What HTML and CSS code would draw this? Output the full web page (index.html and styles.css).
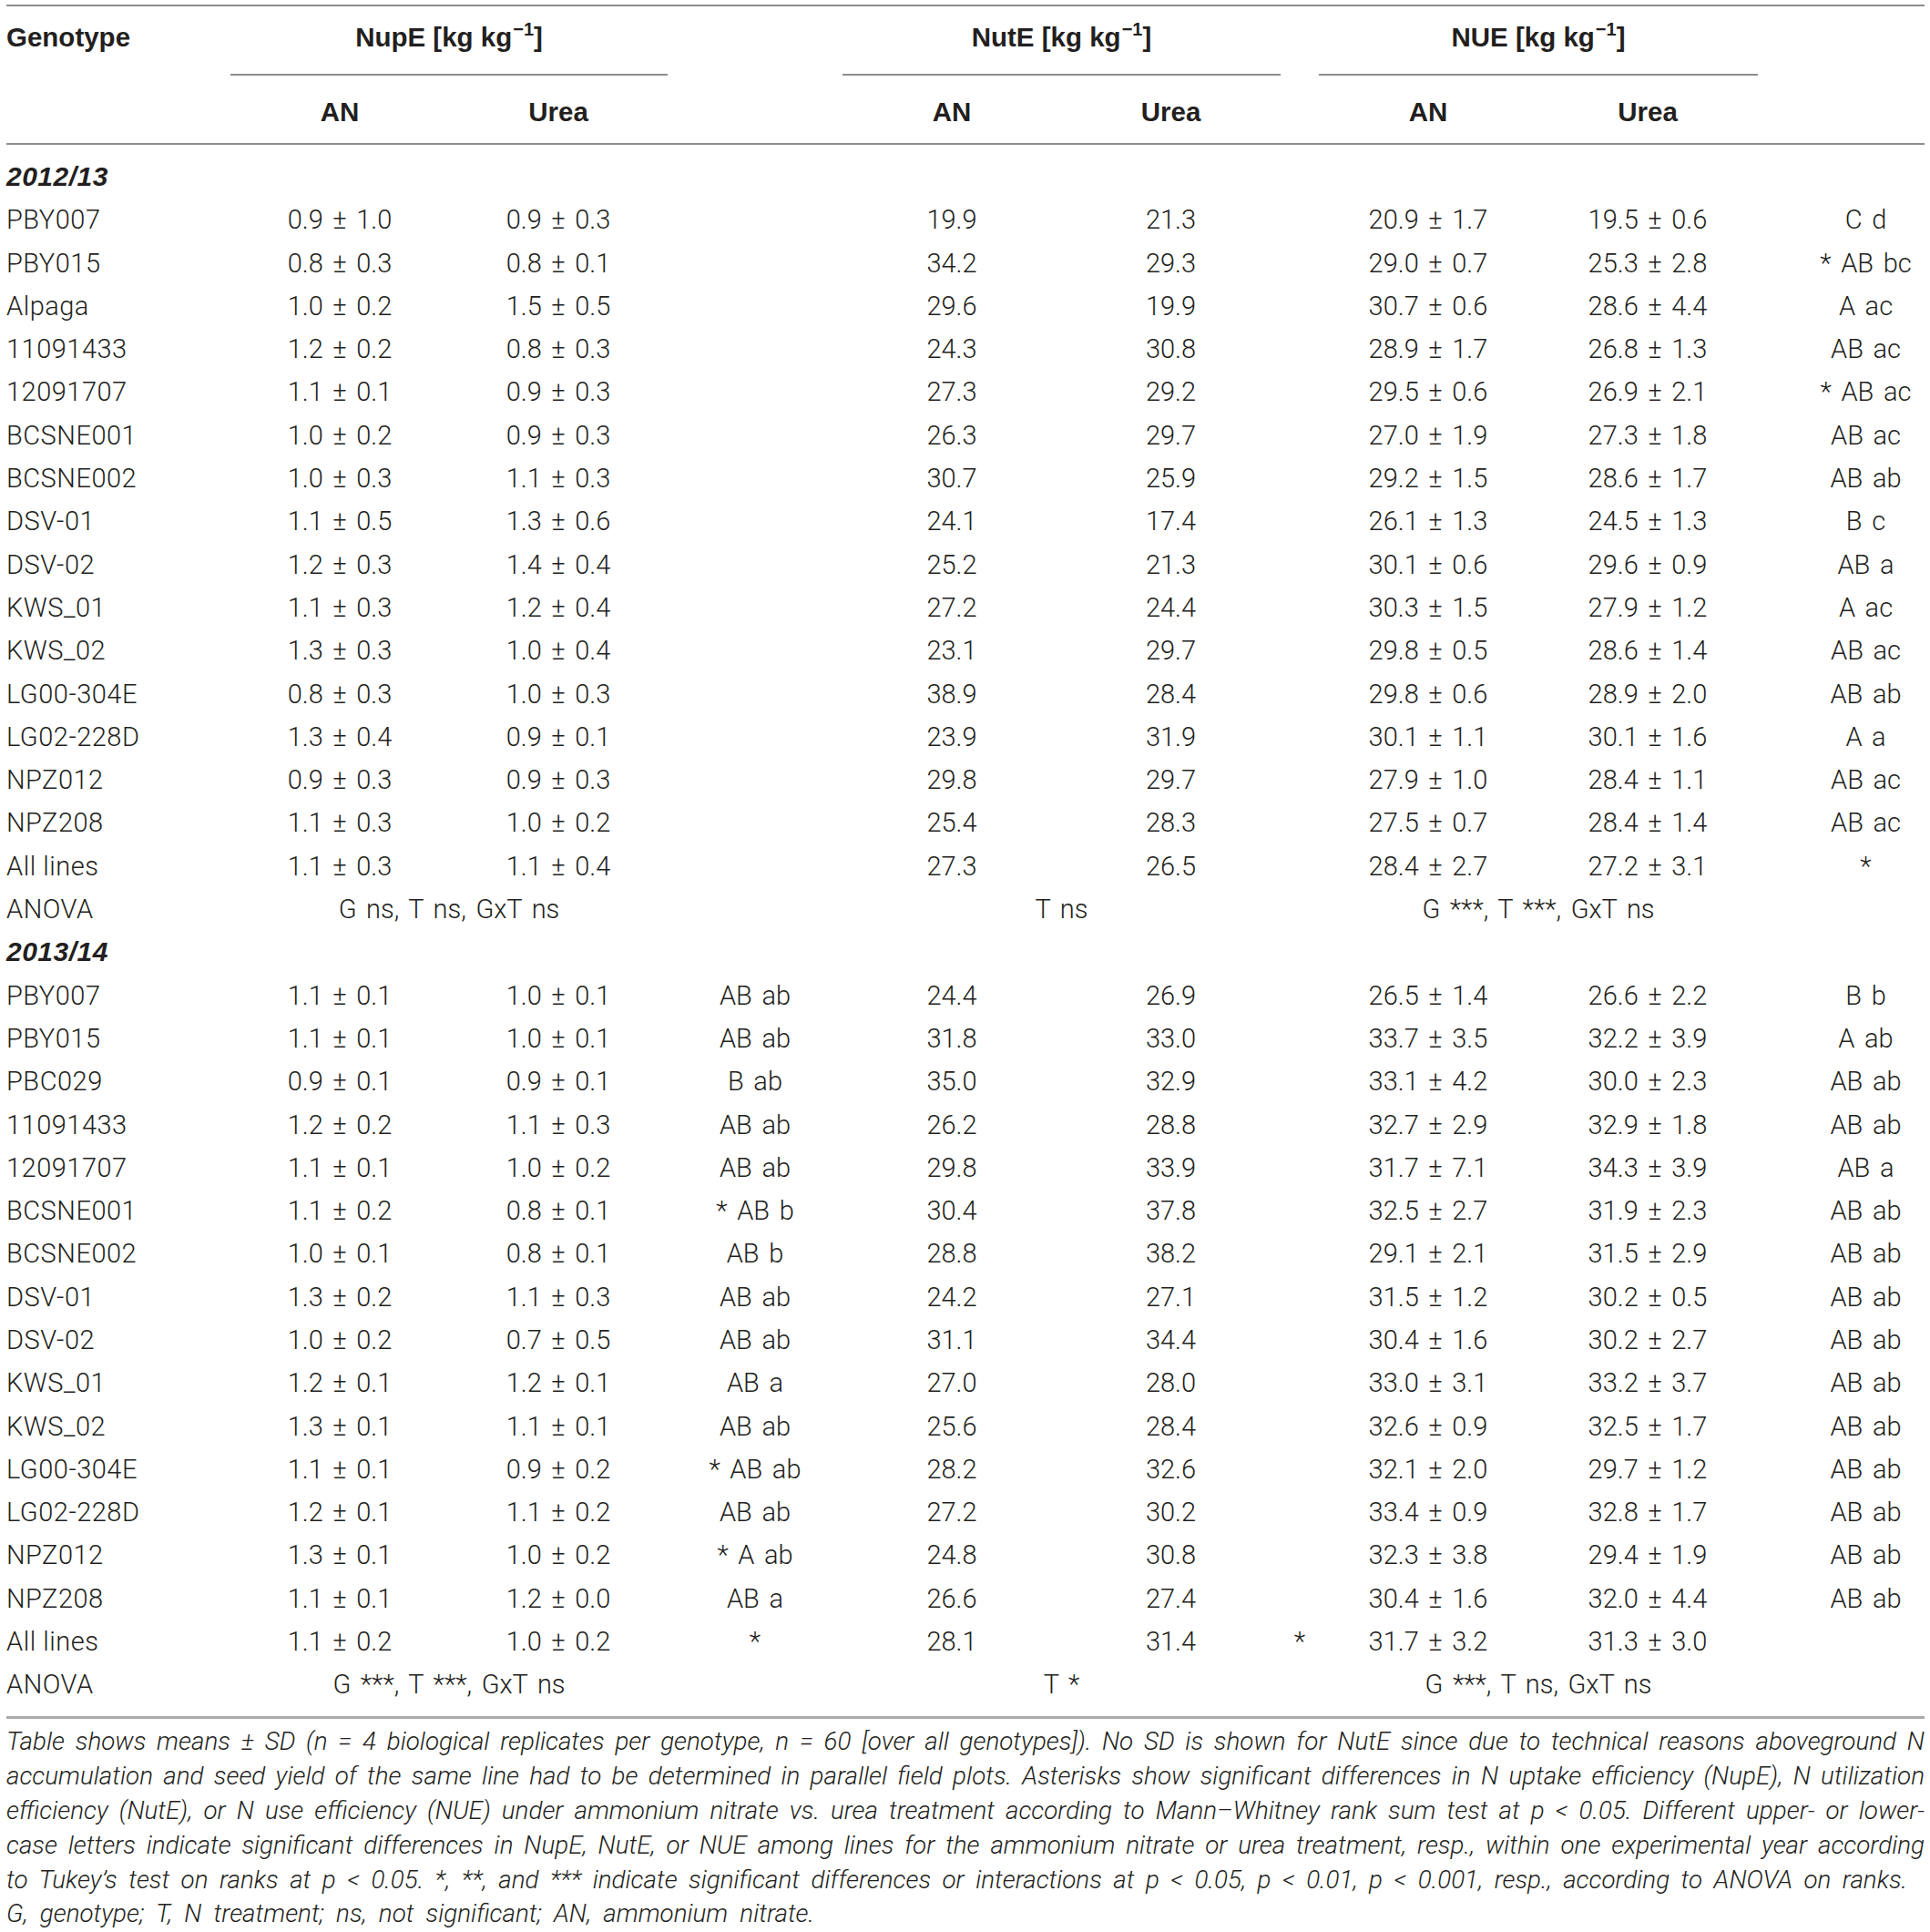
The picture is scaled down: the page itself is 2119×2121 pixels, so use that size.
FILE: index.html
```html
<!DOCTYPE html>
<html lang="en">
<head>
<meta charset="utf-8">
<title>NupE, NutE and NUE table</title>
<link rel="stylesheet" href="styles.css">
</head>
<body>
<div class="page">
  <div class="tbl">
    <div class="grid h1">
      <div class="hc left">Genotype</div>
      <div class="hc grp g1">NupE [kg kg<sup>−1</sup>]</div>
      <div class="hc grp g2">NutE [kg kg<sup>−1</sup>]</div>
      <div class="hc grp g3">NUE [kg kg<sup>−1</sup>]</div>
    </div>
    <div class="grid h2">
      <div></div>
      <div class="hc">AN</div>
      <div class="hc">Urea</div>
      <div></div>
      <div class="hc">AN</div>
      <div class="hc">Urea</div>
      <div></div>
      <div class="hc">AN</div>
      <div class="hc">Urea</div>
      <div></div>
    </div>
    <div class="tbody">
      <div class="grid row"><div class="year">2012/13</div></div>
      <div class="grid row"><div>PBY007</div><div>0.9 ± 1.0</div><div>0.9 ± 0.3</div><div></div><div>19.9</div><div>21.3</div><div></div><div>20.9 ± 1.7</div><div>19.5 ± 0.6</div><div class="last">C d</div></div>
      <div class="grid row"><div>PBY015</div><div>0.8 ± 0.3</div><div>0.8 ± 0.1</div><div></div><div>34.2</div><div>29.3</div><div></div><div>29.0 ± 0.7</div><div>25.3 ± 2.8</div><div class="last">* AB bc</div></div>
      <div class="grid row"><div>Alpaga</div><div>1.0 ± 0.2</div><div>1.5 ± 0.5</div><div></div><div>29.6</div><div>19.9</div><div></div><div>30.7 ± 0.6</div><div>28.6 ± 4.4</div><div class="last">A ac</div></div>
      <div class="grid row"><div>11091433</div><div>1.2 ± 0.2</div><div>0.8 ± 0.3</div><div></div><div>24.3</div><div>30.8</div><div></div><div>28.9 ± 1.7</div><div>26.8 ± 1.3</div><div class="last">AB ac</div></div>
      <div class="grid row"><div>12091707</div><div>1.1 ± 0.1</div><div>0.9 ± 0.3</div><div></div><div>27.3</div><div>29.2</div><div></div><div>29.5 ± 0.6</div><div>26.9 ± 2.1</div><div class="last">* AB ac</div></div>
      <div class="grid row"><div>BCSNE001</div><div>1.0 ± 0.2</div><div>0.9 ± 0.3</div><div></div><div>26.3</div><div>29.7</div><div></div><div>27.0 ± 1.9</div><div>27.3 ± 1.8</div><div class="last">AB ac</div></div>
      <div class="grid row"><div>BCSNE002</div><div>1.0 ± 0.3</div><div>1.1 ± 0.3</div><div></div><div>30.7</div><div>25.9</div><div></div><div>29.2 ± 1.5</div><div>28.6 ± 1.7</div><div class="last">AB ab</div></div>
      <div class="grid row"><div>DSV-01</div><div>1.1 ± 0.5</div><div>1.3 ± 0.6</div><div></div><div>24.1</div><div>17.4</div><div></div><div>26.1 ± 1.3</div><div>24.5 ± 1.3</div><div class="last">B c</div></div>
      <div class="grid row"><div>DSV-02</div><div>1.2 ± 0.3</div><div>1.4 ± 0.4</div><div></div><div>25.2</div><div>21.3</div><div></div><div>30.1 ± 0.6</div><div>29.6 ± 0.9</div><div class="last">AB a</div></div>
      <div class="grid row"><div>KWS_01</div><div>1.1 ± 0.3</div><div>1.2 ± 0.4</div><div></div><div>27.2</div><div>24.4</div><div></div><div>30.3 ± 1.5</div><div>27.9 ± 1.2</div><div class="last">A ac</div></div>
      <div class="grid row"><div>KWS_02</div><div>1.3 ± 0.3</div><div>1.0 ± 0.4</div><div></div><div>23.1</div><div>29.7</div><div></div><div>29.8 ± 0.5</div><div>28.6 ± 1.4</div><div class="last">AB ac</div></div>
      <div class="grid row"><div>LG00-304E</div><div>0.8 ± 0.3</div><div>1.0 ± 0.3</div><div></div><div>38.9</div><div>28.4</div><div></div><div>29.8 ± 0.6</div><div>28.9 ± 2.0</div><div class="last">AB ab</div></div>
      <div class="grid row"><div>LG02-228D</div><div>1.3 ± 0.4</div><div>0.9 ± 0.1</div><div></div><div>23.9</div><div>31.9</div><div></div><div>30.1 ± 1.1</div><div>30.1 ± 1.6</div><div class="last">A a</div></div>
      <div class="grid row"><div>NPZ012</div><div>0.9 ± 0.3</div><div>0.9 ± 0.3</div><div></div><div>29.8</div><div>29.7</div><div></div><div>27.9 ± 1.0</div><div>28.4 ± 1.1</div><div class="last">AB ac</div></div>
      <div class="grid row"><div>NPZ208</div><div>1.1 ± 0.3</div><div>1.0 ± 0.2</div><div></div><div>25.4</div><div>28.3</div><div></div><div>27.5 ± 0.7</div><div>28.4 ± 1.4</div><div class="last">AB ac</div></div>
      <div class="grid row"><div>All lines</div><div>1.1 ± 0.3</div><div>1.1 ± 0.4</div><div></div><div>27.3</div><div>26.5</div><div></div><div>28.4 ± 2.7</div><div>27.2 ± 3.1</div><div class="last">*</div></div>
      <div class="grid row"><div>ANOVA</div><div class="s1">G ns, T ns, GxT ns</div><div class="s2">T ns</div><div class="s3">G ***, T ***, GxT ns</div></div>

      <div class="grid row"><div class="year">2013/14</div></div>
      <div class="grid row"><div>PBY007</div><div>1.1 ± 0.1</div><div>1.0 ± 0.1</div><div>AB ab</div><div>24.4</div><div>26.9</div><div></div><div>26.5 ± 1.4</div><div>26.6 ± 2.2</div><div class="last">B b</div></div>
      <div class="grid row"><div>PBY015</div><div>1.1 ± 0.1</div><div>1.0 ± 0.1</div><div>AB ab</div><div>31.8</div><div>33.0</div><div></div><div>33.7 ± 3.5</div><div>32.2 ± 3.9</div><div class="last">A ab</div></div>
      <div class="grid row"><div>PBC029</div><div>0.9 ± 0.1</div><div>0.9 ± 0.1</div><div>B ab</div><div>35.0</div><div>32.9</div><div></div><div>33.1 ± 4.2</div><div>30.0 ± 2.3</div><div class="last">AB ab</div></div>
      <div class="grid row"><div>11091433</div><div>1.2 ± 0.2</div><div>1.1 ± 0.3</div><div>AB ab</div><div>26.2</div><div>28.8</div><div></div><div>32.7 ± 2.9</div><div>32.9 ± 1.8</div><div class="last">AB ab</div></div>
      <div class="grid row"><div>12091707</div><div>1.1 ± 0.1</div><div>1.0 ± 0.2</div><div>AB ab</div><div>29.8</div><div>33.9</div><div></div><div>31.7 ± 7.1</div><div>34.3 ± 3.9</div><div class="last">AB a</div></div>
      <div class="grid row"><div>BCSNE001</div><div>1.1 ± 0.2</div><div>0.8 ± 0.1</div><div>* AB b</div><div>30.4</div><div>37.8</div><div></div><div>32.5 ± 2.7</div><div>31.9 ± 2.3</div><div class="last">AB ab</div></div>
      <div class="grid row"><div>BCSNE002</div><div>1.0 ± 0.1</div><div>0.8 ± 0.1</div><div>AB b</div><div>28.8</div><div>38.2</div><div></div><div>29.1 ± 2.1</div><div>31.5 ± 2.9</div><div class="last">AB ab</div></div>
      <div class="grid row"><div>DSV-01</div><div>1.3 ± 0.2</div><div>1.1 ± 0.3</div><div>AB ab</div><div>24.2</div><div>27.1</div><div></div><div>31.5 ± 1.2</div><div>30.2 ± 0.5</div><div class="last">AB ab</div></div>
      <div class="grid row"><div>DSV-02</div><div>1.0 ± 0.2</div><div>0.7 ± 0.5</div><div>AB ab</div><div>31.1</div><div>34.4</div><div></div><div>30.4 ± 1.6</div><div>30.2 ± 2.7</div><div class="last">AB ab</div></div>
      <div class="grid row"><div>KWS_01</div><div>1.2 ± 0.1</div><div>1.2 ± 0.1</div><div>AB a</div><div>27.0</div><div>28.0</div><div></div><div>33.0 ± 3.1</div><div>33.2 ± 3.7</div><div class="last">AB ab</div></div>
      <div class="grid row"><div>KWS_02</div><div>1.3 ± 0.1</div><div>1.1 ± 0.1</div><div>AB ab</div><div>25.6</div><div>28.4</div><div></div><div>32.6 ± 0.9</div><div>32.5 ± 1.7</div><div class="last">AB ab</div></div>
      <div class="grid row"><div>LG00-304E</div><div>1.1 ± 0.1</div><div>0.9 ± 0.2</div><div>* AB ab</div><div>28.2</div><div>32.6</div><div></div><div>32.1 ± 2.0</div><div>29.7 ± 1.2</div><div class="last">AB ab</div></div>
      <div class="grid row"><div>LG02-228D</div><div>1.2 ± 0.1</div><div>1.1 ± 0.2</div><div>AB ab</div><div>27.2</div><div>30.2</div><div></div><div>33.4 ± 0.9</div><div>32.8 ± 1.7</div><div class="last">AB ab</div></div>
      <div class="grid row"><div>NPZ012</div><div>1.3 ± 0.1</div><div>1.0 ± 0.2</div><div>* A ab</div><div>24.8</div><div>30.8</div><div></div><div>32.3 ± 3.8</div><div>29.4 ± 1.9</div><div class="last">AB ab</div></div>
      <div class="grid row"><div>NPZ208</div><div>1.1 ± 0.1</div><div>1.2 ± 0.0</div><div>AB a</div><div>26.6</div><div>27.4</div><div></div><div>30.4 ± 1.6</div><div>32.0 ± 4.4</div><div class="last">AB ab</div></div>
      <div class="grid row"><div>All lines</div><div>1.1 ± 0.2</div><div>1.0 ± 0.2</div><div>*</div><div>28.1</div><div>31.4</div><div>*</div><div>31.7 ± 3.2</div><div>31.3 ± 3.0</div><div class="last"></div></div>
      <div class="grid row"><div>ANOVA</div><div class="s1">G ***, T ***, GxT ns</div><div class="s2">T *</div><div class="s3">G ***, T ns, GxT ns</div></div>
    </div>
  </div>
  <div class="rule"></div>
  <div class="notes">
    <div class="ln">Table shows means ± SD (n = 4 biological replicates per genotype, n = 60 [over all genotypes]). No SD is shown for NutE since due to technical reasons aboveground N</div>
    <div class="ln">accumulation and seed yield of the same line had to be determined in parallel field plots. Asterisks show significant differences in N uptake efficiency (NupE), N utilization</div>
    <div class="ln">efficiency (NutE), or N use efficiency (NUE) under ammonium nitrate vs. urea treatment according to Mann–Whitney rank sum test at p &lt; 0.05. Different upper- or lower-</div>
    <div class="ln">case letters indicate significant differences in NupE, NutE, or NUE among lines for the ammonium nitrate or urea treatment, resp., within one experimental year according</div>
    <div class="ln l5">to Tukey’s test on ranks at p &lt; 0.05. *, **, and *** indicate significant differences or interactions at p &lt; 0.05, p &lt; 0.01, p &lt; 0.001, resp., according to ANOVA on ranks.</div>
    <div class="ln l6">G, genotype; T, N treatment; ns, not significant; AN, ammonium nitrate.</div>
  </div>
</div>
</body>
</html>
```

FILE: styles.css
```css
* { box-sizing: border-box; }
html, body { margin: 0; padding: 0; background: #ffffff; }
body {
  font-family: Roboto, "Liberation Sans", sans-serif;
  font-weight: 300;
  color: #231f20;
  font-size: 29px;
}
.page { width: 2119px; padding: 5px 6px 0 7px; }
.tbl { width: 2106px; border-top: 2px solid #8e8e8e; }
.grid {
  display: grid;
  grid-template-columns: 246px 240px 240px 192px 240px 241px 42px 240px 242px 1fr;
}
.hc {
  font-family: "Liberation Sans", Arial, sans-serif;
  font-weight: 700;
  font-size: 29.5px;
  display: flex;
  align-items: center;
  justify-content: center;
  white-space: nowrap;
}
.hc sup { font-size: 20px; line-height: 1; position: relative; top: -9px; margin-left: 1px; vertical-align: baseline; }
.left { justify-content: flex-start; }
.h1 { height: 76px; }
.h1 > .hc { padding-bottom: 6px; border-bottom: 2px solid transparent; }
.h1 > .grp { border-bottom-color: #8e8e8e; }
.g1 { grid-column: 2 / 4; }
.g2 { grid-column: 5 / 7; }
.g3 { grid-column: 8 / 10; }
.h2 { height: 76px; border-bottom: 2px solid #8e8e8e; }
.h2 > .hc { padding-top: 6px; }
.tbody { padding-top: 11.35px; }
.row { height: 47.3px; align-items: center; word-spacing: 3.5px; }
.row > div { text-align: center; white-space: nowrap; line-height: 34px; }
.row > div:first-child { text-align: left; word-spacing: 0; letter-spacing: 0.5px; }
.row > .last { padding-left: 54px; }
.row > .year {
  font-family: "Liberation Sans", Arial, sans-serif;
  font-weight: 700;
  font-style: italic;
  font-size: 30px;
  letter-spacing: 0;
}
.s1 { grid-column: 2 / 4; }
.s2 { grid-column: 5 / 7; }
.s3 { grid-column: 8 / 10; }
.rule { width: 2106px; height: 3px; background: #ababab; margin-top: 11.3px; }
.notes { width: 2106px; padding-top: 6px; font-style: italic; font-size: 27.8px; }
.ln { line-height: 37.8px; height: 37.8px; text-align: justify; text-align-last: justify; white-space: normal; overflow: hidden; }
.ln.l5 { width: 2087px; }
.ln.l6 { width: 887px; }
```
